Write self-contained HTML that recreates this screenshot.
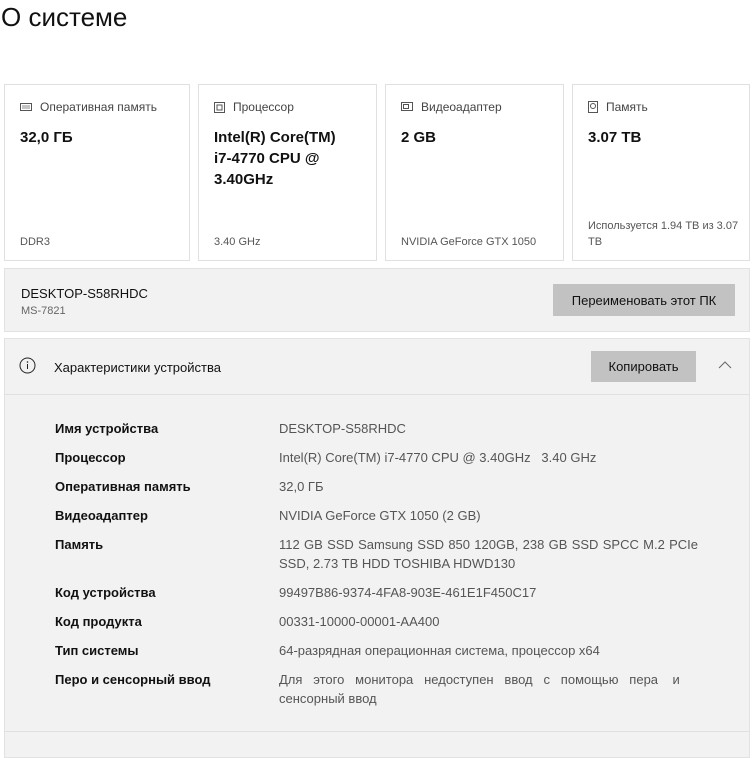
<!DOCTYPE html>
<html><head><meta charset="utf-8"><style>
*{box-sizing:border-box;margin:0;padding:0}
body{width:756px;height:752px;background:#fff;font-family:"Liberation Sans","DejaVu Sans",sans-serif;position:relative;overflow:hidden;color:#000}
.a{position:absolute}
.card{position:absolute;top:84px;height:177px;border:1px solid #e0e0e0;background:#fff}
.ct{position:absolute;left:15px;top:15px;font-size:12px;color:#444;display:flex;align-items:center;gap:8px}
.cv{position:absolute;left:15px;top:42px;font-size:15px;font-weight:bold;line-height:21px;color:#111}
.cb{position:absolute;left:15px;bottom:10px;font-size:11px;color:#555;line-height:16px}
.btn{position:absolute;background:#c2c2c2;font-size:13px;color:#111;display:flex;align-items:center;justify-content:center}
.l{position:absolute;left:55px;font-size:13px;font-weight:bold;color:#111}
.v{position:absolute;left:279px;width:419px;font-size:13px;color:#555;line-height:19px;text-align:justify}
</style></head><body>
<div class="a" style="left:1px;top:2px;font-size:26px;color:#111">О системе</div>

<div class="card" style="left:4px;width:186px">
 <div class="ct"><svg width="12" height="8"><rect x="0.5" y="0.5" width="11" height="7" fill="none" stroke="#555"/><path d="M2 3h8M2 5h8" stroke="#888"/></svg>Оперативная память</div>
 <div class="cv">32,0 ГБ</div><div class="cb">DDR3</div></div>
<div class="card" style="left:198px;width:179px">
 <div class="ct"><svg width="11" height="11"><rect x="0.5" y="0.5" width="10" height="10" fill="none" stroke="#555"/><rect x="3" y="3" width="5" height="5" fill="none" stroke="#555"/></svg>Процессор</div>
 <div class="cv">Intel(R) Core(TM)<br>i7-4770 CPU @<br>3.40GHz</div><div class="cb">3.40 GHz</div></div>
<div class="card" style="left:385px;width:179px">
 <div class="ct"><svg width="12" height="10"><rect x="0.5" y="0.5" width="11" height="8" fill="none" stroke="#555"/><rect x="2.5" y="2.5" width="5" height="4" fill="none" stroke="#555"/></svg>Видеоадаптер</div>
 <div class="cv">2 GB</div><div class="cb">NVIDIA GeForce GTX 1050</div></div>
<div class="card" style="left:572px;width:178px">
 <div class="ct"><svg width="10" height="12"><rect x="0.5" y="0.5" width="9" height="11" fill="none" stroke="#555"/><circle cx="5" cy="5" r="2.5" fill="none" stroke="#555"/></svg>Память</div>
 <div class="cv">3.07 TB</div><div class="cb">Используется 1.94 TB из 3.07<br>TB</div></div>

<div class="a" style="left:4px;top:268px;width:746px;height:64px;background:#f2f2f2;border:1px solid #e2e2e2"></div>
<div class="a" style="left:21px;top:286px;font-size:13px;color:#111">DESKTOP-S58RHDC</div>
<div class="a" style="left:21px;top:305px;font-size:11px;color:#666">MS-7821</div>
<div class="btn" style="left:553px;top:284px;width:182px;height:32px">Переименовать этот ПК</div>

<div class="a" style="left:4px;top:338px;width:746px;height:420px;background:#f2f2f2;border:1px solid #e2e2e2"></div>
<div class="a" style="left:5px;top:394px;width:744px;height:1px;background:#e0e0e0"></div>
<div class="a" style="left:5px;top:731px;width:744px;height:1px;background:#e0e0e0"></div>
<svg class="a" style="left:19px;top:357px" width="17" height="17"><circle cx="8.5" cy="8.5" r="7.5" fill="none" stroke="#222"/><path d="M8.5 7v5" stroke="#222"/><circle cx="8.5" cy="5" r="0.8" fill="#222"/></svg>
<div class="a" style="left:54px;top:360px;font-size:13px;color:#111">Характеристики устройства</div>
<div class="btn" style="left:591px;top:351px;width:105px;height:31px">Копировать</div>
<svg class="a" style="left:718px;top:361px" width="14" height="8"><path d="M1 7L7 1L13 7" fill="none" stroke="#666"/></svg>

<div class="l" style="top:421px">Имя устройства</div><div class="v" style="top:419px">DESKTOP-S58RHDC</div>
<div class="l" style="top:450px">Процессор</div><div class="v" style="top:448px">Intel(R) Core(TM) i7-4770 CPU @ 3.40GHz &nbsp; 3.40 GHz</div>
<div class="l" style="top:479px">Оперативная память</div><div class="v" style="top:477px">32,0 ГБ</div>
<div class="l" style="top:508px">Видеоадаптер</div><div class="v" style="top:506px">NVIDIA GeForce GTX 1050 (2 GB)</div>
<div class="l" style="top:537px">Память</div><div class="v" style="top:535px">112 GB SSD Samsung SSD 850 120GB, 238 GB SSD SPCC M.2 PCIe SSD, 2.73 TB HDD TOSHIBA HDWD130</div>
<div class="l" style="top:585px">Код устройства</div><div class="v" style="top:583px">99497B86-9374-4FA8-903E-461E1F450C17</div>
<div class="l" style="top:614px">Код продукта</div><div class="v" style="top:612px">00331-10000-00001-AA400</div>
<div class="l" style="top:643px">Тип системы</div><div class="v" style="top:641px">64-разрядная операционная система, процессор x64</div>
<div class="l" style="top:672px">Перо и сенсорный ввод</div><div class="v" style="top:670px">Для&nbsp;&nbsp;&nbsp;этого&nbsp;&nbsp;&nbsp;монитора&nbsp;&nbsp;&nbsp;недоступен&nbsp;&nbsp;&nbsp;ввод&nbsp;&nbsp;&nbsp;с&nbsp;&nbsp;&nbsp;помощью&nbsp;&nbsp;&nbsp;пера&nbsp;&nbsp;&nbsp;&nbsp;и<br>сенсорный ввод</div>
</body></html>
